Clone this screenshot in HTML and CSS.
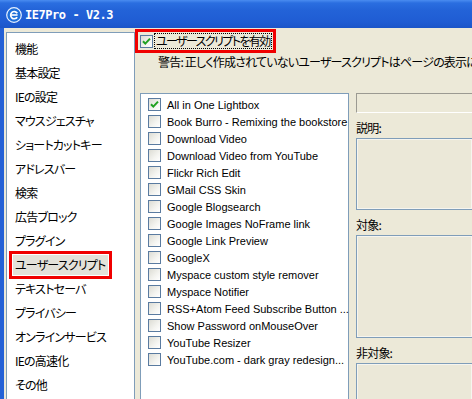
FILE: index.html
```html
<!DOCTYPE html>
<html lang="ja">
<head>
<meta charset="UTF-8" />
<title>IE7Pro - V2.3</title>
<link rel="stylesheet" href="styles.css">
</head>
<body>
<div class="window">
  <div class="titlebar">
    <svg class="app-icon" width="16" height="16" viewBox="0 0 16 16">
      <circle cx="8" cy="8" r="7.3" fill="#1e6fd9" stroke="#e8f1ff" stroke-width="1.2"/>
      <path d="M11.3 6.2 A3.6 3.6 0 1 0 11.2 10.2" fill="none" stroke="#fff" stroke-width="1.7"/>
      <path d="M4.6 8 H11.6" stroke="#fff" stroke-width="1.6"/>
    </svg>
    <span class="title">IE7Pro - V2.3</span>
  </div>

  <div class="frame">
    <ul class="nav">
      <li><span>機能</span></li>
      <li><span>基本設定</span></li>
      <li><span>IEの設定</span></li>
      <li><span>マウスジェスチャ</span></li>
      <li><span>ショートカットキー</span></li>
      <li><span>アドレスバー</span></li>
      <li><span>検索</span></li>
      <li><span>広告ブロック</span></li>
      <li><span>プラグイン</span></li>
      <li class="selected"><span>ユーザースクリプト</span></li>
      <li><span>テキストセーバ</span></li>
      <li><span>プライバシー</span></li>
      <li><span>オンラインサービス</span></li>
      <li><span>IEの高速化</span></li>
      <li><span>その他</span></li>
    </ul>

    <div class="content">
      <div class="enable">
        <span class="chk checked"><svg width="11" height="11" viewBox="0 0 11 11"><path d="M2 5.2 L4.3 7.6 L9 2.6" fill="none" stroke="#21a121" stroke-width="2"/></svg></span>
        <span class="enable-label">ユーザースクリプトを有効</span>
      </div>
      <p class="warning">警告: 正しく作成されていないユーザースクリプトはページの表示に問題を起こす可能性があります。</p>

      <div class="panes">
        <ul class="scripts">
          <li><span class="chk checked"><svg width="11" height="11" viewBox="0 0 11 11"><path d="M2 5.2 L4.3 7.6 L9 2.6" fill="none" stroke="#21a121" stroke-width="2"/></svg></span>All in One Lightbox</li>
          <li><span class="chk"></span>Book Burro - Remixing the bookstore</li>
          <li><span class="chk"></span>Download Video</li>
          <li><span class="chk"></span>Download Video from YouTube</li>
          <li><span class="chk"></span>Flickr Rich Edit</li>
          <li><span class="chk"></span>GMail CSS Skin</li>
          <li><span class="chk"></span>Google Blogsearch</li>
          <li><span class="chk"></span>Google Images NoFrame link</li>
          <li><span class="chk"></span>Google Link Preview</li>
          <li><span class="chk"></span>GoogleX</li>
          <li><span class="chk"></span>Myspace custom style remover</li>
          <li><span class="chk"></span>Myspace Notifier</li>
          <li><span class="chk"></span>RSS+Atom Feed Subscribe Button ...</li>
          <li><span class="chk"></span>Show Password onMouseOver</li>
          <li><span class="chk"></span>YouTube Resizer</li>
          <li><span class="chk"></span>YouTube.com - dark gray redesign...</li>
        </ul>

        <div class="details">
          <div class="namebox"></div>
          <div class="field-label">説明:</div>
          <div class="box box-desc"></div>
          <div class="field-label">対象:</div>
          <div class="box box-target"></div>
          <div class="field-label">非対象:</div>
          <div class="box box-excl"></div>
        </div>
      </div>
    </div>
  </div>
</div>
</body>
</html>
```

FILE: styles.css
```css
:root {
  --xp-face: #ece9d8;
  --xp-blue: #2461d6;
  --field-border: #7f9db9;
  --mark-red: #f00000;
}
body {
  margin: 0;
  padding: 0;
  font-family: "Noto Sans CJK JP", sans-serif;
  font-size: 12px;
  color: #000;
  background: var(--xp-face);
}
.window {
  width: 472px;
  height: 399px;
  overflow: hidden;
}
.titlebar {
  height: 28px;
  box-sizing: border-box;
  padding: 2px 0 0 6px;
  display: flex;
  align-items: center;
  gap: 3px;
  background: linear-gradient(to bottom, #4a8cf0 0, #2a6ee0 3px, #2363d8 10px, #1f5cd3 22px, #1b55c8 28px);
}
.title {
  font-family: "DejaVu Sans Mono", monospace;
  font-weight: 700;
  font-size: 12px;
  letter-spacing: -0.45px;
  color: #fff;
}
.frame {
  display: flex;
  height: 371px;
  border-left: 4px solid var(--xp-blue);
  background: var(--xp-face);
}

/* menu on the left */
.nav {
  list-style: none;
  margin: 4px 0 0 2px;
  padding: 2px 0 0 0;
  width: 127px;
  height: 400px;
  flex-shrink: 0;
  background: #fff;
  border: 1px solid var(--field-border);
  font-feature-settings: "palt";
  letter-spacing: -0.8px;
}
.nav li {
  height: 24px;
  line-height: 24px;
  padding-left: 6px;
}
.nav li span {
  display: inline-block;
  padding: 0 2px;
  line-height: 20px;
  vertical-align: middle;
}
.nav li.selected span {
  background: #e3e1d9;
  outline: 3px solid var(--mark-red);
  outline-offset: 1px;
}

/* right side */
.content {
  flex: 1;
  min-width: 0;
  font-feature-settings: "palt";
  letter-spacing: -0.8px;
}
.enable {
  margin-top: 1px;
  width: fit-content;
  height: 24px;
  box-sizing: border-box;
  border: 3px solid var(--mark-red);
  display: flex;
  align-items: center;
  gap: 2px;
  padding: 0 2px;
  white-space: nowrap;
}
.enable-label {
  outline: 1px dotted #000;
  line-height: 14px;
  padding: 0 1px;
  letter-spacing: -1.6px;
}
.warning {
  margin: 1px 0 0 0;
  padding-left: 23px;
  line-height: 16px;
  white-space: nowrap;
}
.panes {
  display: flex;
  margin: 23px 0 0 5px;
  letter-spacing: 0;
}

.chk {
  width: 13px;
  height: 13px;
  box-sizing: border-box;
  flex-shrink: 0;
  border: 1px solid #5a7ba0;
  background: linear-gradient(135deg, #dcdcd4 0, #f4f4f0 60%, #fff 100%);
  display: flex;
  align-items: center;
  justify-content: center;
}

.scripts {
  list-style: none;
  margin: 0;
  padding: 2px 0 0 0;
  width: 209px;
  height: 320px;
  box-sizing: border-box;
  flex-shrink: 0;
  background: #fff;
  border: 1px solid var(--field-border);
  font-family: "Liberation Sans", Arial, sans-serif;
  font-size: 11px;
}
.scripts li {
  height: 17px;
  display: flex;
  align-items: center;
  gap: 6px;
  padding-left: 7px;
  white-space: nowrap;
}

.details {
  flex: 1;
  margin-left: 7px;
  letter-spacing: -0.8px;
}
.namebox {
  height: 20px;
  box-sizing: border-box;
  border: 1px solid #9b9a92;
  border-bottom-color: #fff;
  border-right: none;
}
.field-label {
  height: 25px;
  box-sizing: border-box;
  padding-top: 5px;
  line-height: 20px;
}
.box {
  box-sizing: border-box;
  border: 1px solid var(--field-border);
  border-right: none;
  box-shadow: inset 1px 1px 0 #f6f5ef, inset -1px -1px 0 #f6f5ef;
  background: #ebe8d8;
}
.box-desc { height: 72px; }
.box-target { height: 103px; }
.box-excl { height: 60px; }
```
